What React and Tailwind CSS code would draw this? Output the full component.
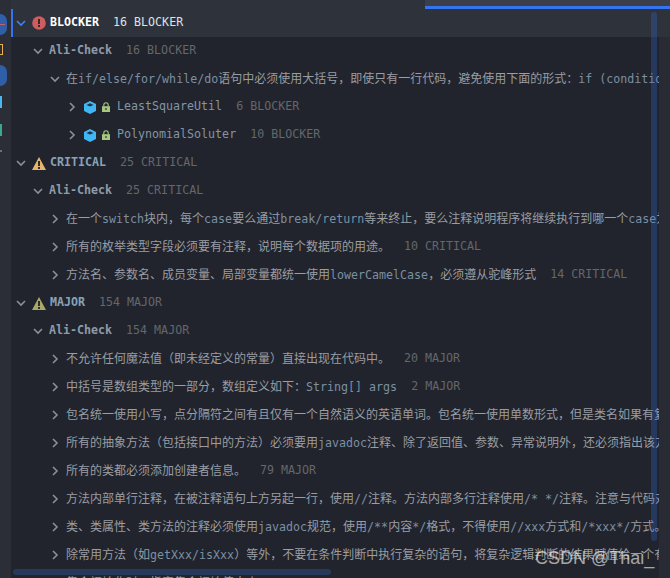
import React from "react";

const MONO = "font-['DejaVu_Sans_Mono','Liberation_Mono',monospace]";

function Chevron({ open, active }) {
  const cls = active ? "text-[#3b82f6]" : "text-[#8b8f96]";
  return (
    <svg width="10" height="10" viewBox="0 0 10 10" fill="none" className={"shrink-0 " + cls}>
      <path
        d={open ? "M1 3l4 4 4-4" : "M3 1l4 4-4 4"}
        stroke="currentColor"
        strokeWidth="1.6"
      />
    </svg>
  );
}

function ErrorIcon() {
  return (
    <svg width="14" height="14" viewBox="0 0 14 14" className="shrink-0">
      <circle cx="7" cy="7" r="6.8" fill="#d05c60" />
      <rect x="6" y="3" width="2" height="5" fill="#2b2d30" />
      <rect x="6" y="9" width="2" height="2" fill="#2b2d30" />
    </svg>
  );
}

function WarnIcon({ color }) {
  return (
    <svg width="14" height="13" viewBox="0 0 14 13" className="shrink-0">
      <path d="M7 0L14 13H0z" fill={color} />
      <rect x="6" y="4" width="2" height="5" fill="#2b2d30" />
      <rect x="6" y="10" width="2" height="2" fill="#2b2d30" />
    </svg>
  );
}

function Cube() {
  return (
    <svg width="12" height="13" viewBox="0 0 12 13" className="shrink-0">
      <path d="M6 0l6 3v7l-6 3-6-3V3z" fill="#40b6f5" />
      <path d="M6 2.2L9.5 4 6 5.6 2.5 4z" fill="#1f3446" />
    </svg>
  );
}

function Lock() {
  return (
    <svg width="8" height="10" viewBox="0 0 8 10" className="shrink-0">
      <path d="M1.8 4.5V3a2.2 2.2 0 014.4 0v1.5" stroke="#a5c77f" strokeWidth="1.1" fill="none" />
      <rect x="0" y="4.2" width="8" height="5.8" fill="#a5c77f" />
      <rect x="3.3" y="6" width="1.4" height="2" fill="#3c4a35" />
    </svg>
  );
}

function Rich({ parts }) {
  return parts.map((p, i) =>
    /^[\x00-\x7f]+$/.test(p) ? (
      <span key={i} className="text-[11.65px] text-[#7c8fa3]">
        {p}
      </span>
    ) : (
      <span key={i}>{p}</span>
    )
  );
}

function Row({ indent, open, children, count, icon, active }) {
  return (
    <div
      className={
        "flex h-[28px] shrink-0 items-center whitespace-nowrap " + indent + " " + (active ? "bg-[#2e323b]" : "")
      }
    >
      <Chevron open={open} active={active} />
      {icon}
      {children}
      {count && (
        <span className={"ml-[14px] shrink-0 text-[11.65px] " + (active ? "text-[#dfe1e5]" : "text-[#64676b]")}>{count}</span>
      )}
    </div>
  );
}

function Severity({ label, count, icon, active }) {
  return (
    <Row
      indent={active ? "border-l-[2px] border-[#3574f0] pl-[3px]" : "pl-[5px]"}
      open
      count={count}
      active={active}
      icon={<span className="ml-[6px] mr-[4px] flex shrink-0">{icon}</span>}
    >
      <span className={"shrink-0 text-[11.65px] font-bold " + (active ? "text-white" : "text-[#8aa2b8]")}>{label}</span>
    </Row>
  );
}

function Group({ count }) {
  return (
    <Row indent="pl-[22px]" open count={count} icon={<span className="w-[6px] shrink-0" />}>
      <span className="shrink-0 text-[11.65px] font-bold text-[#8e9ba8]">Ali-Check</span>
    </Row>
  );
}

function Rule({ parts, count, open }) {
  return (
    <Row indent="pl-[39px]" open={open} count={count} icon={<span className="w-[6px] shrink-0" />}>
      <span className="shrink-0 font-['DejaVu_Sans_Mono','Noto_Sans_CJK_SC',monospace] text-[12px] text-[#9a9da3]">
        <Rich parts={parts} />
      </span>
    </Row>
  );
}

function ClassRow({ name, count }) {
  return (
    <Row
      indent="pl-[56px]"
      count={count}
      icon={
        <span className="ml-[7px] mr-[7px] flex shrink-0 items-center gap-[6px]">
          <Cube />
          <Lock />
        </span>
      }
    >
      <span className="shrink-0 text-[11.65px] text-[#8395a6]">{name}</span>
    </Row>
  );
}

const majorRules = [
  { parts: ["不允许任何魔法值（即未经定义的常量）直接出现在代码中。"], count: "20 MAJOR" },
  { parts: ["中括号是数组类型的一部分，数组定义如下：", "String[] args"], count: "2 MAJOR" },
  { parts: ["包名统一使用小写，点分隔符之间有且仅有一个自然语义的英语单词。包名统一使用单数形式，但是类名如果有复数含义，类名可以使用复数形式。"] },
  { parts: ["所有的抽象方法（包括接口中的方法）必须要用", "javadoc", "注释、除了返回值、参数、异常说明外，还必须指出该方法做什么事情，实现什么功能。"] },
  { parts: ["所有的类都必须添加创建者信息。"], count: "79 MAJOR" },
  { parts: ["方法内部单行注释，在被注释语句上方另起一行，使用", "//", "注释。方法内部多行注释使用", "/* */", "注释。注意与代码对齐。"] },
  { parts: ["类、类属性、类方法的注释必须使用", "javadoc", "规范，使用", "/**", "内容", "*/", "格式，不得使用", "//xxx", "方式和", "/*xxx*/", "方式。"] },
  { parts: ["除常用方法（如", "getXxx/isXxx", "）等外，不要在条件判断中执行复杂的语句，将复杂逻辑判断的结果赋值给一个有意义的布尔变量名。"] },
  { parts: ["集合初始化时，指定集合初始值大小。"] },
];

export default function App() {
  return (
    <div className={"relative flex h-[578px] w-[670px] overflow-hidden bg-[#21242c] " + MONO}>
      {/* left tool gutter */}
      <div className="flex w-[11px] shrink-0 flex-col items-start overflow-hidden bg-[#2b2e36] pt-[14px]">
        <div className="flex h-[21px] w-[7px] items-center rounded-r-full bg-[#2f5fa8]">
          <div className="h-[1px] w-[5px] bg-[#c06070]" />
        </div>
        <div className="mt-[9px] h-[11px] w-[3px] border border-l-0 border-[#e8b04e]" />
        <div className="mt-[10px] h-[21px] w-[7px] rounded-r-full bg-[#2f5fa8]" />
        <div className="mt-[10px] h-[12px] w-[2px] bg-[#48b8f0]" />
        <div className="mt-[16px] h-[12px] w-[2px] bg-[#3aa88f]" />
        <div className="mt-[14px] h-[2px] w-[2px] bg-[#6b6f76]" />
      </div>

      {/* tree */}
      <div className="flex w-[648px] shrink-0 flex-col overflow-hidden">
        <div className="h-[9px] shrink-0 bg-[#2e323b]" />
        <Severity label="BLOCKER" count="16 BLOCKER" active icon={<ErrorIcon />} />
        <Group count="16 BLOCKER" />
        <Rule
          open
          parts={["在", "if/else/for/while/do", "语句中必须使用大括号，即使只有一行代码，避免使用下面的形式：", "if (condition) statements;"]}
        />
        <ClassRow name="LeastSquareUtil" count="6 BLOCKER" />
        <ClassRow name="PolynomialSoluter" count="10 BLOCKER" />
        <Severity label="CRITICAL" count="25 CRITICAL" icon={<WarnIcon color="#e5b56e" />} />
        <Group count="25 CRITICAL" />
        <Rule parts={["在一个", "switch", "块内，每个", "case", "要么通过", "break/return", "等来终止，要么注释说明程序将继续执行到哪一个", "case", "为止"]} />
        <Rule parts={["所有的枚举类型字段必须要有注释，说明每个数据项的用途。"]} count="10 CRITICAL" />
        <Rule parts={["方法名、参数名、成员变量、局部变量都统一使用", "lowerCamelCase", "，必须遵从驼峰形式"]} count="14 CRITICAL" />
        <Severity label="MAJOR" count="154 MAJOR" icon={<WarnIcon color="#a8a868" />} />
        <Group count="154 MAJOR" />
        {majorRules.map((r, i) => (
          <Rule key={i} parts={r.parts} count={r.count} />
        ))}
      </div>

      {/* right strip */}
      <div className="w-[11px] shrink-0 bg-[#282b33]">
        <div className="h-[37px] bg-[#2e323b]" />
      </div>

      {/* overlays */}
      <div className="absolute right-0 top-0 h-[9px] w-[245px] border-b-[3px] border-[#3574f0] bg-[#3a3f4b]" />
      <div className="absolute left-[651px] top-[12px] h-[529px] w-[6px] rounded-full bg-[#3574f0]/25" />
      <div className="absolute left-[13px] top-[569px] h-[6px] w-[318px] rounded-full bg-[#27395a]" />
      <div className="absolute left-[535px] top-[545px] font-['Liberation_Sans',sans-serif] text-[18px] leading-[26px] text-white/60">
        CSDN @Thai_
      </div>
    </div>
  );
}
